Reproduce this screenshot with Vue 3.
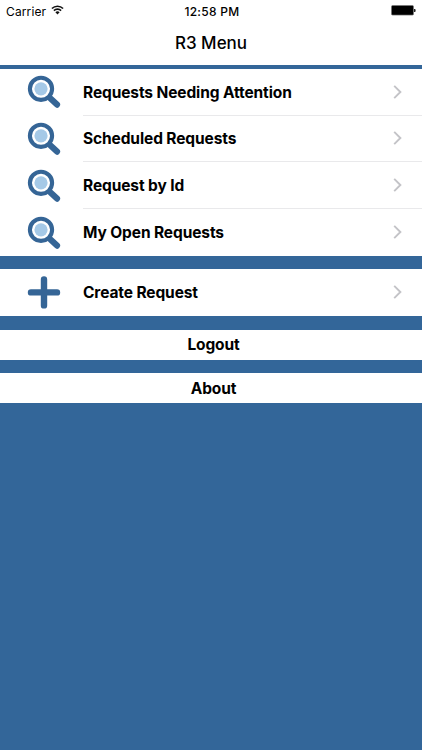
<template>
  <div class="screen">
    <header>
      <div class="status-bar">
        <div class="carrier">
          <span>Carrier</span>
          <svg class="wifi" width="13" height="10" viewBox="0 0 13 10">
            <path d="M0.9 3.5a8 8 0 0 1 11.2 0M2.9 5.6a5.1 5.1 0 0 1 7.2 0" fill="none" stroke="#111" stroke-width="1.6" />
            <path d="M4.4 7.3a3 3 0 0 1 4.2 0L6.5 9.5z" fill="#111" />
          </svg>
        </div>
        <span class="time">12:58 PM</span>
        <svg class="battery" width="26" height="11" viewBox="0 0 26 11">
          <rect x="1.5" y="0.5" width="22" height="9.6" rx="1.2" fill="#000" stroke="#777" stroke-width="0.7" />
          <path d="M24 4h0.6a1 1 0 0 1 1 1v1a1 1 0 0 1-1 1h-0.6z" fill="#222" />
        </svg>
      </div>
      <h1>R3 Menu</h1>
    </header>

    <ul v-for="(group, i) in groups" :key="i" class="group">
      <li v-for="item in group" :key="item.label" class="row">
        <svg v-if="item.icon === 'search'" class="icon" width="34" height="34" viewBox="0 0 34 34">
          <path d="M23.5 23.5L30 29.6" stroke="#356596" stroke-width="6.2" stroke-linecap="round" />
          <circle cx="14" cy="13.8" r="11.1" fill="#fff" stroke="#356596" stroke-width="4.1" />
          <circle cx="14" cy="13.8" r="6.6" fill="#a5c9e7" />
        </svg>
        <svg v-else class="icon" width="34" height="34" viewBox="0 0 34 34">
          <path d="M17 3.4v26M4 16.4h26" stroke="#356596" stroke-width="6.4" stroke-linecap="round" />
        </svg>
        <div class="content">
          <span class="label">{{ item.label }}</span>
          <svg class="chevron" width="9" height="14" viewBox="0 0 9 14">
            <path d="M1.2 0.8L7.4 7L1.2 13.2" fill="none" stroke="#c3c3c7" stroke-width="1.9" />
          </svg>
        </div>
      </li>
    </ul>

    <button v-for="action in actions" :key="action" class="action">
      <span class="label">{{ action }}</span>
    </button>
  </div>
</template>

<script setup>
const groups = [
  [
    { label: 'Requests Needing Attention', icon: 'search' },
    { label: 'Scheduled Requests', icon: 'search' },
    { label: 'Request by Id', icon: 'search' },
    { label: 'My Open Requests', icon: 'search' },
  ],
  [{ label: 'Create Request', icon: 'plus' }],
]

const actions = ['Logout', 'About']
</script>

<style>
body {
  margin: 0;
}
</style>

<style scoped>
.screen {
  box-sizing: border-box;
  height: 750px;
  overflow: hidden;
  background: #336699;
  color: #000;
  font-family: Inter, "Liberation Sans", sans-serif;
}
header {
  height: 65.4px;
  margin-bottom: 3.4px;
  background: #fff;
}
.status-bar {
  display: grid;
  grid-template-columns: 1fr auto 1fr;
  align-items: center;
  height: 22px;
  padding: 0 6px;
  font-size: 12px;
}
.carrier {
  display: flex;
  align-items: center;
  gap: 5px;
  letter-spacing: 0.12px;
}
.wifi {
  margin-top: -2px;
}
.time {
  padding-left: 2px;
  font-weight: 500;
  letter-spacing: 0.3px;
}
.battery {
  justify-self: end;
  margin-top: -1px;
}
h1 {
  margin: 0;
  font-size: 17px;
  font-weight: 500;
  line-height: 43px;
  text-align: center;
}
.group {
  margin: 0 0 13.4px;
  padding: 0;
  list-style: none;
  background: #fff;
}
.row {
  display: flex;
  align-items: center;
  height: 46.8px;
  padding-left: 27px;
}
.icon {
  flex: none;
  margin-right: 22px;
}
.content {
  box-sizing: border-box;
  display: flex;
  flex: 1;
  align-items: center;
  justify-content: space-between;
  height: 100%;
  padding-right: 20px;
  border-bottom: 1px solid #e9e9eb;
}
.row:last-child .content {
  border-bottom-color: transparent;
}
.label {
  font-size: 15.5px;
  font-weight: 650;
  letter-spacing: -0.11px;
}
.row .label {
  padding-top: 1px;
}
.action {
  display: block;
  width: 100%;
  height: 30px;
  margin: 0 0 13.6px;
  padding: 0 0 0 5px;
  border: 0;
  background: #fff;
  color: #000;
  font-family: inherit;
}
</style>
